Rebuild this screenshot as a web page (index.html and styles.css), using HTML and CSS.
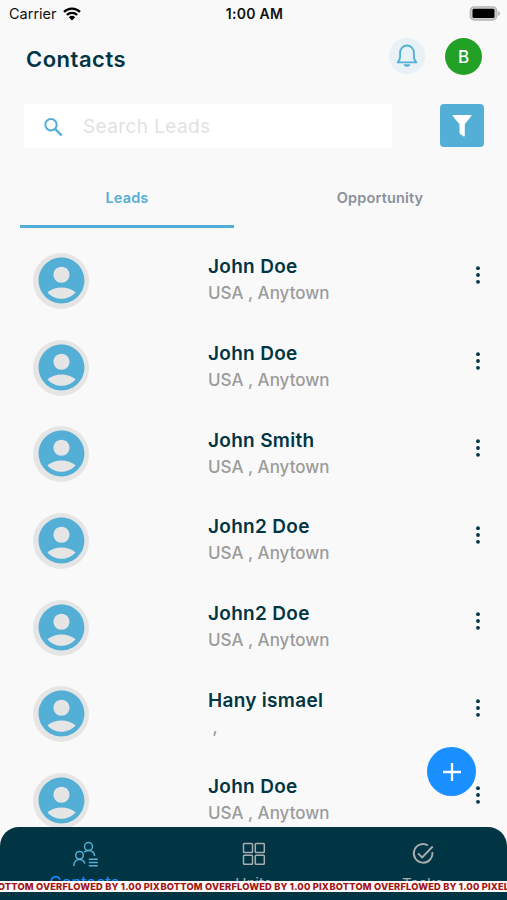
FILE: index.html
```html
<!DOCTYPE html>
<html lang="en">
<head>
    <meta charset="UTF-8">
    <meta name="viewport" content="width=device-width, initial-scale=1.0">
    <title>Contacts</title>
    <link rel="stylesheet" href="styles.css">
</head>
<body>
    <!-- shared icons -->
    <svg class="sprite">
        <symbol id="user" viewBox="0 0 24 24">
            <path fill="#54afd6" d="M12 2C6.48 2 2 6.48 2 12s4.48 10 10 10 10-4.48 10-10S17.52 2 12 2zm0 4c1.93 0 3.5 1.57 3.5 3.5S13.93 13 12 13s-3.5-1.57-3.5-3.5S10.07 6 12 6zm0 14c-2.03 0-4.43-.82-6.14-2.88C7.55 15.8 9.68 15 12 15s4.45.8 6.14 2.12C16.43 19.18 14.03 20 12 20z"/>
        </symbol>
        <symbol id="dots" viewBox="0 0 6 18">
            <circle cx="3" cy="2.2" r="1.9"/><circle cx="3" cy="9" r="1.9"/><circle cx="3" cy="15.8" r="1.9"/>
        </symbol>
    </svg>

    <div class="status-bar">
        <div class="carrier">
            <span>Carrier</span>
            <svg width="18" height="14" viewBox="0 0 18 14">
                <path d="M1 4.9a11.6 11.6 0 0 1 16 0M3.9 7.9a7.5 7.5 0 0 1 10.2 0" fill="none" stroke="#000" stroke-width="2.3"/>
                <path d="M9 13.4L5.9 10.2a4.5 4.5 0 0 1 6.2 0z"/>
            </svg>
        </div>
        <div class="time">1:00 AM</div>
        <div class="battery">
            <svg width="31" height="15" viewBox="0 0 31 15">
                <rect x="1.3" y=".8" width="26.4" height="13.2" rx="4" fill="#ccc" stroke="#b5b5b5" stroke-width="1.3"/>
                <rect x="3.5" y="2.8" width="22" height="9.2" rx="1.5"/>
                <path d="M29 5v5q2-.7 2-2.5t-2-2.5z" fill="#b5b5b5"/>
            </svg>
        </div>
    </div>

    <div class="header">
        <h1>Contacts</h1>
        <div class="bell">
            <svg width="22" height="24" viewBox="0 0 22 24" fill="none" stroke="#54afd6" stroke-width="1.9">
                <path d="M1.7 18.4h18.6c-1.6-1.6-2.4-3-2.4-5.6V8.6C17.9 4.6 14.8 1.5 11 1.5S4.1 4.6 4.1 8.6v4.2c0 2.6-.8 4-2.4 5.6z" stroke-linejoin="round"/>
                <path d="M7.5 20.3h7c-.5 1.7-1.7 2.5-3.5 2.5s-3-.8-3.5-2.5z" fill="#54afd6" stroke="none"/>
            </svg>
        </div>
        <div class="profile">B</div>
    </div>

    <div class="search-row">
        <div class="search-box">
            <svg width="20" height="20" viewBox="0 0 20 20" fill="none" stroke="#54afd6" stroke-width="2">
                <circle cx="8" cy="8.8" r="5.7"/>
                <path d="M12.1 12.9l6.6 6.6" stroke-width="2.4"/>
            </svg>
            <span>Search Leads</span>
        </div>
        <div class="filter">
            <svg width="20" height="24" viewBox="0 0 20 24">
                <path d="M1.1 1h17.8q.9 0 .4.9L12.8 10.2v11.2q0 1.400-1.500.8L8.200 20q-.7-.5-.7-1.400v-8.400L.7 1.900Q.2 1 1.100 1z" fill="#fff"/>
            </svg>
        </div>
    </div>

    <div class="tabs">
        <div class="tab active">Leads</div>
        <div class="tab">Opportunity</div>
    </div>

    <div class="contact-list" id="contactList"></div>

    <div class="add-button">
        <svg width="20" height="20" viewBox="0 0 20 20"><path d="M10 1v18M1 10h18" stroke="#fff" stroke-width="2.3"/></svg>
    </div>

    <div class="bottom-nav">
        <div class="nav-item selected">
            <svg width="26" height="26" viewBox="0 0 26 26" fill="none" stroke="currentColor" stroke-width="1.5">
                <circle cx="16.5" cy="5.5" r="4"/>
                <circle cx="7.500" cy="14.200" r="3.800"/>
                <path d="M1.800 25c0-4 2.300-6.600 5.700-6.600 2.600 0 4.600 1.500 5.400 4M11.800 11.300c1.200-1.200 2.800-1.900 4.700-1.900 3.400 0 5.800 2.200 6.200 5.600"/>
                <path d="M16.800 18.200h9M16.800 21.500h9M16.800 24.800h9" stroke-width="1.6"/>
            </svg>
            <span class="nav-label">Contacts</span>
            <span class="overflow-label">BOTTOM OVERFLOWED BY 1.00 PIXELS</span>
        </div>
        <div class="nav-item">
            <svg width="26" height="26" viewBox="0 0 26 26" fill="none" stroke="currentColor" stroke-width="1.5">
                <rect x="2.5" y="2.5" width="9" height="9" rx=".8"/>
                <rect x="14.3" y="2.5" width="9" height="9" rx=".8"/>
                <rect x="2.5" y="14.3" width="9" height="9" rx=".8"/>
                <rect x="14.3" y="14.3" width="9" height="9" rx=".8"/>
            </svg>
            <span class="nav-label">Units</span>
            <span class="overflow-label">BOTTOM OVERFLOWED BY 1.00 PIXELS</span>
        </div>
        <div class="nav-item">
            <svg width="26" height="26" viewBox="0 0 26 26" fill="none" stroke="currentColor" stroke-width="1.9">
                <path d="M18 4.500A9.300 9.300 0 1 0 22.300 11"/>
                <path d="M8 12.300l4.200 4.200L22.700 5.500"/>
            </svg>
            <span class="nav-label">Tasks</span>
            <span class="overflow-label">BOTTOM OVERFLOWED BY 1.00 PIXELS</span>
        </div>
    </div>

    <script src="contacts.js"></script>
</body>
</html>
```
FILE: styles.css
```css
* {
    box-sizing: border-box;
}

body {
    font-family: Inter, Roboto, sans-serif;
    margin: 0;
    height: 900px;
    overflow: hidden;
    position: relative;
    background-color: #f9f9f9;
    color: #023543;
}

svg {
    display: block;
    flex-shrink: 0;
}

.sprite {
    width: 0;
    height: 0;
    position: absolute;
}

.status-bar {
    display: flex;
    align-items: center;
    height: 27px;
    padding: 0 7px 0 9px;
    color: #111;
    font-size: 14.5px;
}

.carrier,
.battery {
    flex: 1;
    display: flex;
    align-items: center;
    gap: 6px;
}

.battery {
    justify-content: flex-end;
}

.time {
    font-weight: 600;
    font-size: 14px;
    letter-spacing: 0.3px;
}

.header {
    display: flex;
    align-items: center;
    height: 57px;
    padding: 1px 25px 0 26px;
}

h1 {
    flex: 1;
    margin: 6px 0 0;
    font-size: 22px;
    font-weight: 600;
    letter-spacing: 0.5px;
}

.bell,
.profile {
    display: flex;
    align-items: center;
    justify-content: center;
    width: 36px;
    height: 36px;
    border-radius: 50%;
    background-color: #e8f1f5;
}

.profile {
    width: 37px;
    height: 37px;
    margin-left: 20px;
    padding-top: 1px;
    background-color: #23a127;
    color: white;
    font-size: 17px;
    font-weight: 500;
}

.search-row {
    display: flex;
    justify-content: space-between;
    margin: 20px 23px 0 24px;
}

.search-box {
    display: flex;
    align-items: center;
    gap: 20px;
    width: 368px;
    height: 44px;
    padding-left: 19px;
    border-radius: 3px;
    background-color: white;
    color: #e2e2e2;
    font-size: 19px;
    letter-spacing: 0.4px;
}

.filter {
    display: flex;
    align-items: center;
    justify-content: center;
    width: 44px;
    height: 43px;
    border-radius: 4px;
    background-color: #54afd6;
}

.tabs {
    display: flex;
    gap: 39px;
    height: 60px;
    margin: 20px 20px 0;
}

.tab {
    flex: 1;
    padding-top: 21px;
    text-align: center;
    font-size: 14.5px;
    font-weight: 600;
    letter-spacing: 0.15px;
    color: #8b919b;
}

.tab.active {
    color: #54afd6;
    border-bottom: 3px solid #54afd6;
}

.contact-list {
    margin-top: 9px;
}

.contact {
    display: flex;
    height: 86.7px;
    padding: 16px 26.5px 0 33px;
}

.avatar {
    display: flex;
    align-items: center;
    justify-content: center;
    width: 56px;
    height: 56px;
    padding-bottom: 1px;
    border-radius: 50%;
    background-color: #e5e5e5;
}

.contact-info {
    flex: 1;
    margin-left: 119px;
}

.contact-name {
    padding-top: 1.2px;
    line-height: 26px;
    font-size: 19px;
    font-weight: 600;
    letter-spacing: 0.3px;
    white-space: pre;
}

.contact-place {
    line-height: 27px;
    font-size: 17px;
    font-weight: 500;
    color: #9b9b9b;
    white-space: pre;
}

.dots {
    width: 6px;
    height: 18px;
    margin-top: 12.5px;
    fill: #023543;
}

.add-button {
    position: absolute;
    left: 427px;
    top: 747px;
    display: flex;
    align-items: center;
    justify-content: center;
    width: 49px;
    height: 49px;
    border-radius: 50%;
    background-color: #1a8fff;
}

.bottom-nav {
    position: absolute;
    left: 0;
    right: 0;
    bottom: 0;
    display: flex;
    height: 73px;
    border-radius: 19px 19px 0 0;
    background-color: #023543;
    overflow: hidden;
}

.nav-item {
    flex: 1;
    min-width: 0;
    display: flex;
    flex-direction: column;
    align-items: center;
    padding-top: 14px;
    color: #a7adb0;
}

.nav-item.selected {
    color: #54afd6;
}

.nav-label {
    height: 14px;
    margin-top: 6px;
    line-height: 21px;
    font-size: 15px;
}

.nav-item.selected .nav-label {
    line-height: 19px;
    color: #1a8fff;
    font-size: 16.5px;
}

/* debug strip along the bottom of each tab */
.overflow-label {
    position: relative;
    height: 11px;
    margin-top: -6px;
    line-height: 11px;
    font-size: 9.3px;
    font-weight: 800;
    letter-spacing: 0.17px;
    white-space: nowrap;
    color: #a31515;
    background-color: #fafafa;
}
```
FILE: contacts.js
```js
const contacts = [
    { name: 'John Doe', place: 'USA , Anytown' },
    { name: 'John Doe', place: 'USA , Anytown' },
    { name: 'John Smith', place: 'USA , Anytown' },
    { name: 'John2 Doe', place: 'USA , Anytown' },
    { name: 'John2 Doe', place: 'USA , Anytown' },
    { name: 'Hany ismael', place: ' ,' },
    { name: 'John Doe', place: 'USA , Anytown' }
];

const contactList = document.getElementById('contactList');

contacts.forEach(contact => {
    const item = document.createElement('div');
    item.className = 'contact';
    item.innerHTML = `
        <div class="avatar"><svg width="55" height="55"><use href="#user"/></svg></div>
        <div class="contact-info">
            <div class="contact-name">${contact.name}</div>
            <div class="contact-place">${contact.place}</div>
        </div>
        <svg class="dots"><use href="#dots"/></svg>
    `;
    contactList.appendChild(item);
});
```
